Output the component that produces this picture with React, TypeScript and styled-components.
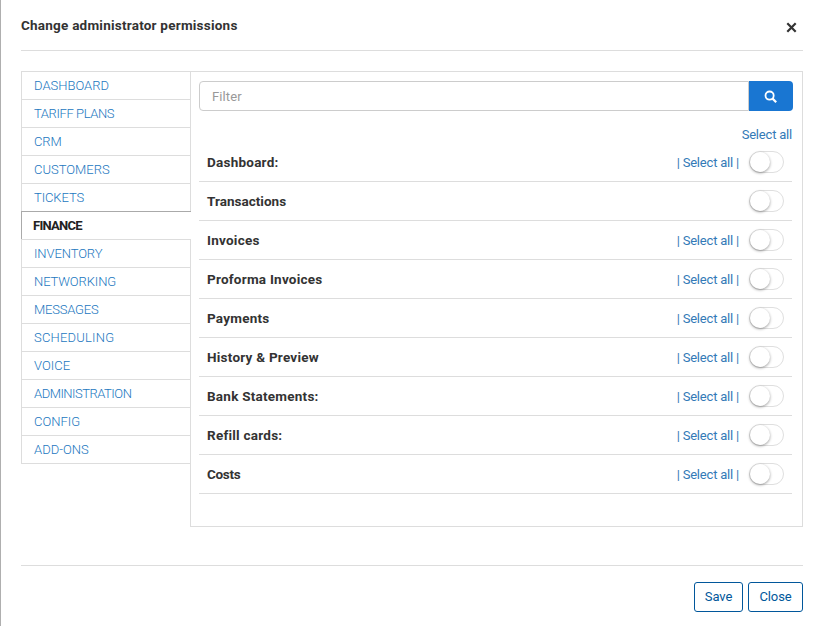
import React from "react";
import styled, { createGlobalStyle } from "styled-components";

const GlobalStyle = createGlobalStyle`
  * { box-sizing: border-box; }
  body { margin: 0; background: #fff; overflow: hidden; }
  button, input { font: inherit; letter-spacing: inherit; }
`;

const Modal = styled.div`
  width: 823px;
  height: 626px;
  padding: 0 20px;
  border-left: 1px solid #afafaf;
  background: #fff;
  color: #333;
  font: 13px/20px Roboto, "Liberation Sans", sans-serif;
`;

const Header = styled.header`
  display: flex;
  justify-content: space-between;
  height: 51px;
  padding: 16px 6px 0 0;
  border-bottom: 1px solid #ddd;
`;

const Title = styled.h1`
  margin: 0;
  font-size: 13.5px;
  line-height: 19px;
  font-weight: 700;
  letter-spacing: 0.23px;
`;

const CloseIcon = styled.button`
  display: flex;
  width: 11px;
  height: 11px;
  margin-top: 6px;
  padding: 0;
  border: 0;
  background: none;
`;

const Body = styled.main`
  display: flex;
  align-items: flex-start;
  height: 456px;
  margin-top: 20px;
`;

const Nav = styled.nav`
  display: flex;
  flex-direction: column;
  width: 170px;
  margin-right: -1px;
  z-index: 1;
`;

const Tab = styled.a<{ $active?: boolean; $last?: boolean; $tracking: number }>`
  height: ${(p) => (p.$last ? 29 : 28)}px;
  padding: 4px 0 0 ${(p) => (p.$active ? 11 : 12)}px;
  border: 1px solid #ddd;
  border-width: 1px ${(p) => (p.$active ? 0 : 1)}px ${(p) => (p.$last ? 1 : 0)}px 1px;
  border-top-color: ${(p) => (p.$active ? "#aaa" : "#ddd")};
  border-left-color: ${(p) => (p.$active ? "#aaa" : "#ddd")};
  background: #fff;
  color: ${(p) => (p.$active ? "#222" : "#2277c0")};
  font-weight: ${(p) => (p.$active ? 700 : 300)};
  letter-spacing: ${(p) => p.$tracking}px;
`;

const Panel = styled.section`
  flex: 1;
  height: 456px;
  padding: 9px 9px 0 8px;
  border: 1px solid #ddd;
`;

const Search = styled.div`
  display: flex;
  height: 30px;
`;

const Input = styled.input`
  flex: 1;
  min-width: 0;
  padding: 2px 12px 0;
  border: 1px solid #ccc;
  border-radius: 4px 0 0 4px;
  outline: 0;
  letter-spacing: 0.1px;
  &::placeholder { color: #999; opacity: 1; }
`;

const SearchButton = styled.button`
  display: grid;
  place-items: center;
  width: 44px;
  padding: 0 1px 0 0;
  border: 0;
  border-radius: 0 4px 4px 0;
  background: #1976d2;
`;

const SelectAll = styled.a`
  color: #337ab7;
  white-space: pre;
  letter-spacing: -0.2px;
`;

const TopLink = styled.div`
  display: flex;
  justify-content: flex-end;
  height: 32px;
  padding: 14px 1px 0 0;
`;

const Row = styled.div`
  display: flex;
  align-items: flex-start;
  height: 39px;
  margin-right: 1px;
  padding: 8px 8px 0;
  border-bottom: 1px solid #ddd;
`;

const RowLabel = styled.span<{ $tracking?: number }>`
  flex: 1;
  padding-top: 2px;
  font-size: 13.5px;
  line-height: 19px;
  font-weight: 700;
  letter-spacing: ${(p) => p.$tracking ?? 0.24}px;
`;

const RowLink = styled(SelectAll)`
  margin-right: 10px;
  padding-top: 2px;
`;

const Toggle = styled.button`
  width: 35px;
  height: 22px;
  padding: 0;
  border: 1px solid #dfdfdf;
  border-radius: 11px;
  background: #fff;
  &::before {
    content: "";
    display: block;
    width: 20px;
    height: 20px;
    border-radius: 50%;
    background: #fff;
    box-shadow: 0 1px 3px rgba(0, 0, 0, 0.4);
  }
`;

const Footer = styled.footer`
  display: flex;
  justify-content: flex-end;
  gap: 5px;
  margin-top: 38px;
  padding-top: 16px;
  border-top: 1px solid #ddd;
`;

const ActionButton = styled.button<{ $width: number }>`
  width: ${(p) => p.$width}px;
  height: 30px;
  padding: 0;
  border: 1px solid #01579b;
  border-radius: 3px;
  background: #fff;
  color: #01579b;
  letter-spacing: -0.1px;
`;

const tabs = [
  { name: "DASHBOARD", tracking: 0 },
  { name: "TARIFF PLANS", tracking: -0.4 },
  { name: "CRM", tracking: -0.1 },
  { name: "CUSTOMERS", tracking: 0 },
  { name: "TICKETS", tracking: -0.1 },
  { name: "FINANCE", tracking: -0.75 },
  { name: "INVENTORY", tracking: -0.1 },
  { name: "NETWORKING", tracking: -0.1 },
  { name: "MESSAGES", tracking: -0.2 },
  { name: "SCHEDULING", tracking: 0.2 },
  { name: "VOICE", tracking: 0 },
  { name: "ADMINISTRATION", tracking: -0.5 },
  { name: "CONFIG", tracking: 0 },
  { name: "ADD-ONS", tracking: 0 },
];

const permissions = [
  { label: "Dashboard:", group: true },
  { label: "Transactions", group: false, tracking: 0.02 },
  { label: "Invoices", group: true },
  { label: "Proforma Invoices", group: true },
  { label: "Payments", group: true },
  { label: "History & Preview", group: true },
  { label: "Bank Statements:", group: true },
  { label: "Refill cards:", group: true },
  { label: "Costs", group: true, tracking: -0.3 },
];

export default function App() {
  return (
    <Modal>
      <GlobalStyle />
      <Header>
        <Title>Change administrator permissions</Title>
        <CloseIcon aria-label="Close dialog">
          <svg width="11" height="11" viewBox="0 0 11 11">
            <path d="M1.3 1.3l8.4 8.4M9.7 1.3l-8.4 8.4" stroke="#333" strokeWidth="2.2" />
          </svg>
        </CloseIcon>
      </Header>
      <Body>
        <Nav>
          {tabs.map((tab, i) => (
            <Tab
              key={tab.name}
              $active={tab.name === "FINANCE"}
              $last={i === tabs.length - 1}
              $tracking={tab.tracking}
            >
              {tab.name}
            </Tab>
          ))}
        </Nav>
        <Panel>
          <Search>
            <Input placeholder="Filter" />
            <SearchButton aria-label="Search">
              <svg width="13" height="13" viewBox="0 0 13 13" fill="none" stroke="#fff" strokeWidth="1.8">
                <circle cx="5.6" cy="5.6" r="4.1" />
                <path d="M8.6 8.6l3.6 3.6" strokeWidth="2.2" />
              </svg>
            </SearchButton>
          </Search>
          <TopLink><SelectAll>Select all</SelectAll></TopLink>
          {permissions.map((p) => (
            <Row key={p.label}>
              <RowLabel $tracking={p.tracking}>{p.label}</RowLabel>
              {p.group && <RowLink>| Select all |</RowLink>}
              <Toggle role="switch" aria-checked="false" aria-label={p.label} />
            </Row>
          ))}
        </Panel>
      </Body>
      <Footer>
        <ActionButton $width={49}>Save</ActionButton>
        <ActionButton $width={55}>Close</ActionButton>
      </Footer>
    </Modal>
  );
}
